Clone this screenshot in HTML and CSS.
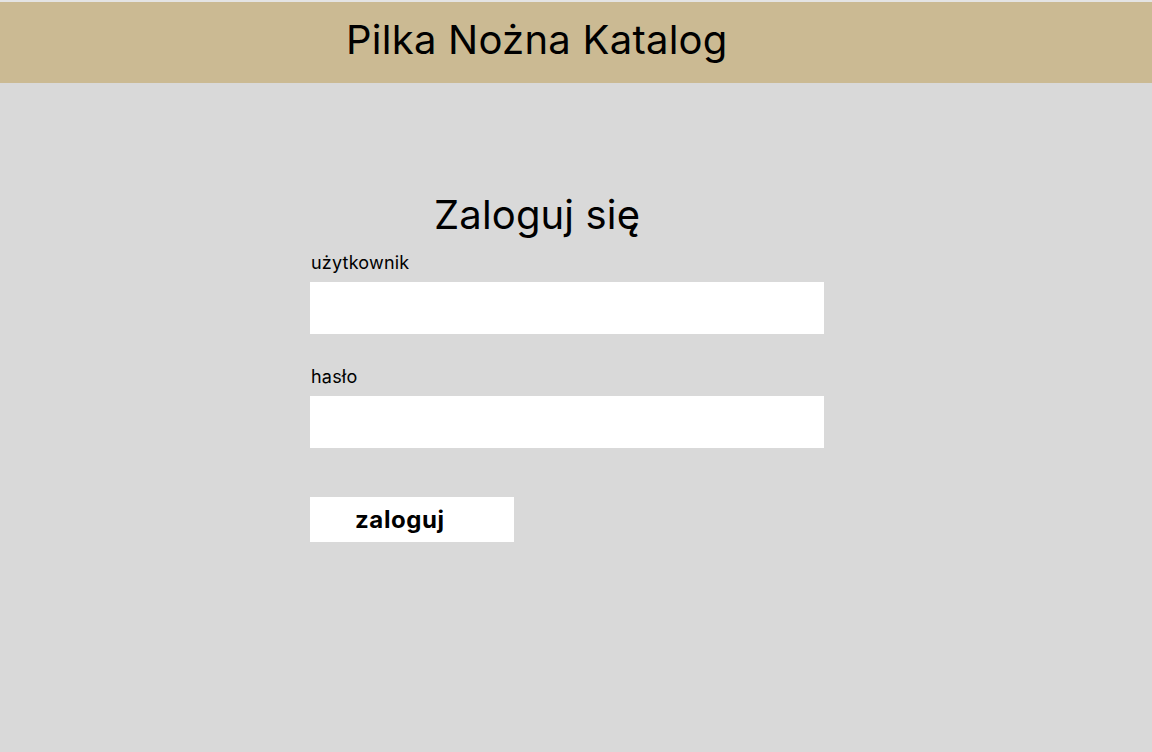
FILE: index.html
```html
<!DOCTYPE html>
<html lang="pl">
<head>
<meta charset="utf-8">
<title>Pilka Nożna Katalog</title>
<link rel="stylesheet" href="styles.css">
</head>
<body>
<header class="topbar">
  <h1 class="site-title">Pilka Nożna Katalog</h1>
</header>
<main class="content">
  <form class="login">
    <h2 class="login-title">Zaloguj się</h2>
    <label class="field-label" for="user">użytkownik</label>
    <input class="field-input" id="user" type="text">
    <label class="field-label field-label-second" for="pass">hasło</label>
    <input class="field-input" id="pass" type="password">
    <button class="submit" type="button">zaloguj</button>
  </form>
</main>
</body>
</html>
```

FILE: styles.css
```css
* { box-sizing: border-box; }
html, body {
  margin: 0;
  padding: 0;
  height: 100%;
}
body {
  background: #d9d9d9;
  font-family: Inter, "Noto Sans", sans-serif;
  color: #000;
}
.topbar {
  height: 83px;
  border-top: 2px solid #e4e4e4;
  background: #cbba93;
  padding: 14px 0 0 346px;
}
.site-title {
  margin: 0;
  font-size: 40px;
  font-weight: 400;
  line-height: 48px;
  letter-spacing: 0.25px;
}
.content {
  padding: 108px 0 0 310px;
}
.login {
  display: flex;
  flex-direction: column;
  align-items: flex-start;
  width: 514px;
}
.login-title {
  margin: 0 0 13px 124px;
  font-size: 40px;
  font-weight: 400;
  line-height: 48px;
  letter-spacing: 0.15px;
}
.field-label {
  font-size: 18px;
  line-height: 22px;
  margin-bottom: 8px;
  padding-left: 1px;
  letter-spacing: 0.2px;
}
.field-label-second {
  margin-top: 32px;
}
.field-input {
  width: 514px;
  height: 52px;
  border: 0;
  background: #fff;
  margin: 0;
  font: inherit;
  outline: none;
}
.submit {
  margin-top: 49px;
  width: 204px;
  height: 45px;
  border: 0;
  background: #fff;
  padding: 0 0 0 45px;
  text-align: left;
  font-family: Inter, "Noto Sans", sans-serif;
  font-size: 24px;
  line-height: 29px;
  font-weight: 700;
  letter-spacing: 0.6px;
  color: #000;
}
```
